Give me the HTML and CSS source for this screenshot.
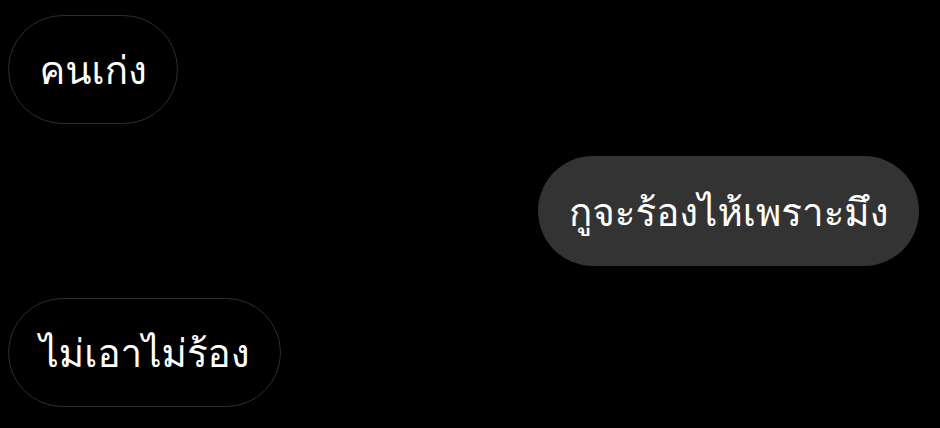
FILE: index.html
```html
<!DOCTYPE html>
<html>
<head>
    <meta charset="utf-8">
    <title>แชท</title>
    <link rel="stylesheet" href="styles.css">
</head>
<body>
    <div class="chat">
        <div class="row">
            <div class="bubble incoming">คนเก่ง</div>
        </div>
        <div class="row outgoing-row">
            <div class="bubble outgoing">กูจะร้องไห้เพราะมึง</div>
        </div>
        <div class="row">
            <div class="bubble incoming">ไม่เอาไม่ร้อง</div>
        </div>
    </div>
</body>
</html>
```

FILE: styles.css
```css
body {
    margin: 0;
    background-color: #000;
    font-family: "Loma", "Noto Sans Thai Looped", sans-serif;
    color: #fff;
}
.chat {
    display: flex;
    flex-direction: column;
    gap: 32px;
    padding: 15px 21px 0 8px;
}
.row {
    display: flex;
}
.outgoing-row {
    justify-content: flex-end;
}
.bubble {
    box-sizing: border-box;
    height: 109px;
    padding: 2px 30.5px 0;
    border-radius: 55px;
    font-size: 38.5px;
    display: flex;
    align-items: center;
}
.incoming {
    border: 1.5px solid #2e2e2e;
    background-color: #000;
}
.outgoing {
    background-color: #333;
    height: 110px;
}
```
